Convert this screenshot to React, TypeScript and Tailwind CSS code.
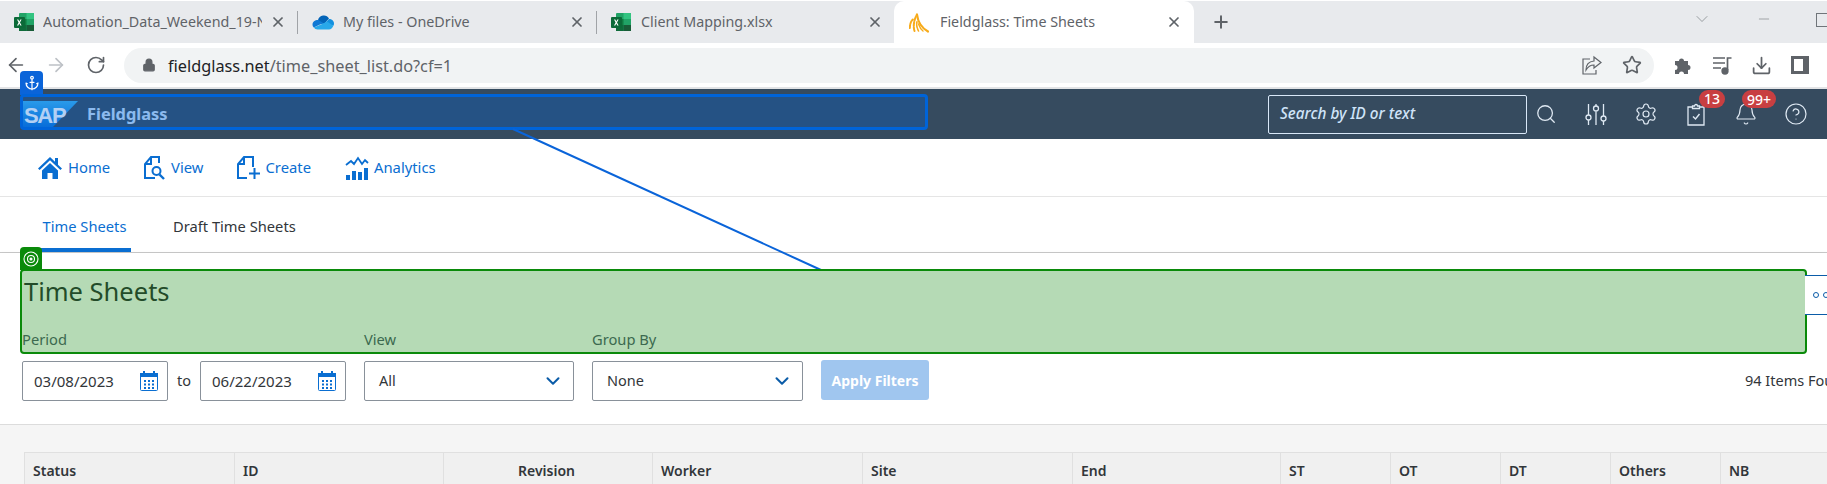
import React from "react";
import {
  ArrowLeft, ArrowRight, RotateCw, Lock, Star, Download, X, Plus, ChevronDown, Minus,
  Search, Settings, Bell, CircleHelp, Anchor,
} from "lucide-react";

const ExcelIcon = () => (
  <svg width="20" height="20" viewBox="0 0 20 20" className="shrink-0">
    <rect x="5" y="1" width="15" height="18" rx="1" fill="#21a366" />
    <rect x="12.5" y="1" width="7.5" height="6" fill="#33c481" />
    <rect x="5" y="7" width="7.5" height="6" fill="#107c41" />
    <rect x="12.5" y="13" width="7.5" height="6" fill="#185c37" />
    <rect x="5" y="13" width="7.5" height="6" fill="#0f6b3a" />
    <rect x="0" y="5" width="11" height="11" rx="1" fill="#0b6a38" />
    <path d="M3 7.5l1.6 2.9L3 13.4h1.3l1-2 1 2h1.3L6 10.4 7.6 7.5H6.3l-1 2-1-2z" fill="#fff" />
  </svg>
);

const OneDriveIcon = () => (
  <svg width="22" height="16" viewBox="0 0 22 16" className="shrink-0">
    <path d="M6 6a6 6 0 0 1 11-1.5L12 10 6.5 7.5z" fill="#0364b8" />
    <path d="M6.5 6C3 5.8.5 8 .5 10.5c0 1.2.5 2.2 1.3 3L8 10.5l4-1z" fill="#0f78d4" />
    <path d="M17 5c2.8 0 5 2 5 4.5 0 .8-.2 1.5-.6 2.2L13 9z" fill="#1490df" />
    <path d="M1.8 13.5C2.7 14.7 4 15.4 5.5 15.4H17c1.900 0 3.500-1.500 4.400-3.700L15 7.500l-6 3z" fill="#28a8ea" />
  </svg>
);

const FieldglassIcon = () => (
  <svg width="20" height="21" viewBox="0 0 20 21" fill="none" stroke="#f7ab1b" strokeLinecap="round" className="shrink-0">
    <path d="M.8 16C1 12 1.8 9.5 3.8 7.5" strokeWidth="2" strokeDasharray="3 1.2" />
    <path d="M5.5 19C4 14.5 4.8 8 8 2.5" strokeWidth="2" strokeDasharray="4 1.2" />
    <path d="M8 2.5c.8 7 4 13 11 17" strokeWidth="2.2" />
    <path d="M9.5 19c-1.800-3.500-2.300-7-1.300-10" strokeWidth="1.6" strokeDasharray="2.5 1" />
    <path d="M14 19c-2-1.500-3.500-4-4.500-7" strokeWidth="1.4" />
  </svg>
);

const SapLogo = () => (
  <div className="relative h-[27px] w-[55px] shrink-0">
    <svg width="55" height="27" viewBox="0 0 55 27" className="absolute inset-0">
      <defs>
        <linearGradient id="sap" x1="0" y1="0" x2="0" y2="1">
          <stop offset="0" stopColor="#3cb2f0" />
          <stop offset="1" stopColor="#0a70d8" />
        </linearGradient>
      </defs>
      <polygon points="0,0 55,0 29,27 0,27" fill="url(#sap)" />
    </svg>
    <span className="absolute left-[1px] top-[2px] text-[22px] font-bold leading-[25px] tracking-[-1.3px] text-white font-['Liberation_Sans',sans-serif]">SAP</span>
  </div>
);

const HomeIcon = () => (
  <svg width="24" height="24" viewBox="0 0 24 24" fill="#0a6ed1">
    <path d="M12 1 0 12.5l1.600 1.600L12 4.200l10.400 9.900 1.600-1.600-4-3.800V2h-3v3.800z" />
    <path d="M4 14.5 12 7l8 7.500V23h-5.500v-6h-5v6H4z" />
  </svg>
);

const ViewIcon = () => (
  <svg width="21" height="24" viewBox="0 0 21 24" fill="none" stroke="#0a6ed1" strokeWidth="2">
    <path d="M15 7V1H7L1 8v14h10" />
    <path d="M7 1v7H1" />
    <circle cx="12.5" cy="15" r="4" />
    <path d="m15.5 18.500 4.500 4.500" strokeWidth="2.4" />
  </svg>
);

const CreateIcon = () => (
  <svg width="24" height="24" viewBox="0 0 24 24" fill="none" stroke="#0a6ed1" strokeWidth="2">
    <path d="M16 11V1H7L1 8v14h9" />
    <path d="M7 1v7H1" />
    <path d="M17.5 12v11M12 17.500h11" />
  </svg>
);

const AnalyticsIcon = () => (
  <svg width="24" height="24" viewBox="0 0 24 24">
    <path d="m1 9 5-4 3 3 4-6 4 6 3-4 3 3" fill="none" stroke="#0a6ed1" strokeWidth="1.8" />
    <rect x="1" y="19" width="4" height="5" fill="#0a6ed1" />
    <rect x="7" y="15" width="4" height="9" fill="#0a6ed1" />
    <rect x="13" y="16" width="4" height="8" fill="#0a6ed1" />
    <rect x="19" y="12" width="4" height="12" fill="#0a6ed1" />
  </svg>
);

const CalendarIcon = () => (
  <svg width="18" height="20" viewBox="0 0 18 20" className="shrink-0">
    <rect x=".5" y="2.5" width="17" height="17" rx="1" fill="#fff" stroke="#0a6ed1" />
    <rect x="0" y="2" width="18" height="4" fill="#0a6ed1" />
    <rect x="3" y="0" width="2" height="3" fill="#0a6ed1" />
    <rect x="13" y="0" width="2" height="3" fill="#0a6ed1" />
    {[4, 8, 12].map((x) => [9, 12.5, 16].map((y) => <rect key={`${x}-${y}`} x={x} y={y} width="2" height="2" fill="#0a6ed1" />))}
  </svg>
);

const PuzzleIcon = () => (
  <svg width="19" height="19" viewBox="0 0 19 19" fill="#5f6368">
    <path d="M1 5h4a2.500 2.500 0 1 1 5 0h4v4a2.500 2.500 0 1 1 0 5v4h-4a2.500 2.500 0 1 0-5 0H1v-4a2.500 2.500 0 1 0 0-5z" />
  </svg>
);

const ShareIcon = () => (
  <svg width="20" height="20" viewBox="0 0 20 20" fill="none" stroke="#5f6368" strokeWidth="1.2">
    <path d="M8 4H1v15h13v-4" />
    <path d="M12 2l7 5.500-7 5.500V10c-4 0-6 1.500-8 5 0-5 3-8.500 8-9z" />
  </svg>
);

const QueueIcon = () => (
  <svg width="20" height="20" viewBox="0 0 20 20" fill="none" stroke="#5f6368" strokeWidth="1.7">
    <path d="M1 3h12M1 8h12M1 13h8" />
    <path d="M15.5 15V3h4" />
    <circle cx="13" cy="16" r="2.8" fill="#5f6368" />
  </svg>
);

const SidePanelIcon = () => (
  <div className="flex h-[18px] w-[18px] justify-end border-[3px] border-[#5f6368] bg-white">
    <div className="h-full w-[3px] bg-[#5f6368]" />
  </div>
);

const SlidersIcon = () => (
  <svg width="24" height="24" viewBox="0 0 24 24" fill="none" stroke="#dfe9f3" strokeWidth="1.3">
    <path d="M4.500 2v11M4.500 18v5M12 2v2M12 9.500V23M19.500 2v12M19.500 19v4" />
    <circle cx="4.5" cy="15.5" r="2.5" />
    <circle cx="12" cy="6.5" r="2.5" />
    <circle cx="19.5" cy="16.5" r="2.5" />
  </svg>
);

const ClipboardIcon = () => (
  <svg width="18" height="23" viewBox="0 0 18 23" fill="none" stroke="#dfe9f3" strokeWidth="1.3">
    <path d="M5 4H1v18h16V4h-4" />
    <path d="M5.500 5.500V3h2a1.500 1.500 0 0 1 3 0h2v2.500z" />
    <path d="m6 13.500 2.500 2.500L12.500 11" strokeWidth="1.4" />
  </svg>
);

function BrowserTab({ width, icon, title, titleWidth, gap, sep }: { width: string; icon: React.ReactNode; title: string; titleWidth: string; gap: string; sep?: boolean }) {
  return (
    <div className={`flex h-full shrink-0 items-center pl-[14px] ${width}`}>
      {icon}
      <span className={`overflow-hidden whitespace-nowrap text-[14.3px] text-[#5f6368] ${gap} ${titleWidth}`}>{title}</span>
      <X size={16} strokeWidth={2.6} className="ml-auto mr-[11px] text-[#5f6368]" />
      {sep && <div className="h-[23px] w-px bg-[#a0a3a7]" />}
    </div>
  );
}

function SelectBox({ value, width }: { value: string; width: string }) {
  return (
    <div className={`flex h-[40px] shrink-0 items-center justify-between rounded-[2px] border border-[#89919a] pl-[14px] pr-[9px] text-[14.5px] text-[#32363a] ${width}`}>
      <span>{value}</span>
      <ChevronDown size={22} strokeWidth={2.2} className="text-[#0b5ca8]" />
    </div>
  );
}

function DateBox({ value }: { value: string }) {
  return (
    <div className="flex h-[40px] w-[146px] shrink-0 items-center justify-between rounded-[2px] border border-[#89919a] pl-[11px] pr-[9px] text-[15px] text-[#32363a]">
      <span>{value}</span>
      <CalendarIcon />
    </div>
  );
}

const columns: [string, string, string?][] = [
  ["Status", "w-[210px]"],
  ["ID", "w-[209px]"],
  ["Revision", "w-[209px]", "pl-[66px]"],
  ["Worker", "w-[210px]"],
  ["Site", "w-[210px]"],
  ["End", "w-[208px]"],
  ["ST", "w-[110px]"],
  ["OT", "w-[110px]"],
  ["DT", "w-[110px]"],
  ["Others", "w-[110px]"],
  ["NB", "w-[107px]"],
];

export default function App() {
  return (
    <div className="relative h-[484px] w-[1827px] overflow-hidden bg-white font-['Noto_Sans',sans-serif]">
      {/* browser tab strip */}
      <div className="flex h-[43px] items-center border-t border-white bg-[#e8eaed]">
        <BrowserTab width="w-[298px]" icon={<ExcelIcon />} title="Automation_Data_Weekend_19-N" titleWidth="w-[219px]" gap="ml-[9px]" sep />
        <BrowserTab width="w-[299px]" icon={<OneDriveIcon />} title="My files - OneDrive" titleWidth="w-[200px]" gap="ml-[9px]" sep />
        <BrowserTab width="w-[297px]" icon={<ExcelIcon />} title="Client Mapping.xlsx" titleWidth="w-[200px]" gap="ml-[10px]" />
        <div className="flex h-full w-[300px] shrink-0 items-center rounded-t-[10px] bg-white pl-[15px]">
          <FieldglassIcon />
          <span className="ml-[11px] whitespace-nowrap text-[14.3px] text-[#5f6368]">Fieldglass: Time Sheets</span>
          <X size={16} strokeWidth={2.6} className="ml-auto mr-[12px] text-[#5f6368]" />
        </div>
        <Plus size={20} strokeWidth={2.4} className="ml-[17px] text-[#5f6368]" />
        <div className="ml-auto flex items-start gap-[44px] self-start pt-[8px] text-[#70757a]">
          <ChevronDown size={20} strokeWidth={0.8} />
          <Minus size={16} strokeWidth={0.9} className="mt-[2px]" />
          <div className="relative mr-[-1px] mt-[4px] h-[14px] w-[12px] border border-[#70757a]" />
        </div>
      </div>

      {/* browser toolbar */}
      <div className="flex h-[46px] items-center border-b-2 border-[#e3e4e6] bg-white">
        <ArrowLeft size={22} strokeWidth={1.8} className="ml-[5px] text-[#5f6368]" />
        <ArrowRight size={22} strokeWidth={1.8} className="ml-[18px] text-[#bdc1c6]" />
        <RotateCw size={20} strokeWidth={2} className="ml-[19px] text-[#5f6368]" />
        <div className="ml-[18px] flex h-[35px] w-[1530px] items-center rounded-full bg-[#f1f3f4] pl-[18px] pr-[12px]">
          <Lock size={14} fill="#5f6368" className="text-[#5f6368]" />
          <span className="ml-[12px] whitespace-nowrap pt-[2px] text-[16.3px] text-[#5f6368]">
            <span className="text-[#202124]">fieldglass.net</span>/time_sheet_list.do?cf=1
          </span>
          <div className="ml-auto flex items-center gap-[20px]">
            <ShareIcon />
            <Star size={20} strokeWidth={2} className="text-[#5f6368]" />
          </div>
        </div>
        <div className="ml-[20px] flex items-center gap-[19px]">
          <PuzzleIcon />
          <QueueIcon />
          <Download size={21} strokeWidth={2} className="text-[#5f6368]" />
          <SidePanelIcon />
        </div>
      </div>

      {/* Fieldglass header */}
      <div className="flex h-[50px] items-center bg-[#364b5f] pl-[23px]">
        <SapLogo />
        <span className="ml-[9px] text-[16.4px] font-bold text-[#c9e0f8]">Fieldglass</span>
        <div className="ml-auto flex h-[39px] w-[259px] items-center rounded-[2px] border border-[#d9e8f8] pb-[1px] pl-[11px] text-[15.3px] font-medium italic text-[#cfe3f8]">
          Search by ID or text
        </div>
        <div className="ml-[7px] flex w-[293px] items-center gap-[26px] text-[#dfe9f3]">
          <div className="flex w-[24px] justify-center"><Search size={22} strokeWidth={1.4} /></div>
          <SlidersIcon />
          <Settings size={24} strokeWidth={1.2} />
          <div className="relative flex w-[24px] justify-center">
            <ClipboardIcon />
            <span className="absolute left-[15px] top-[-13px] flex h-[18px] w-[26px] items-center justify-center rounded-full bg-[#c83f41] text-[14px] font-medium text-white">13</span>
          </div>
          <div className="relative">
            <Bell size={24} strokeWidth={1.2} />
            <span className="absolute left-[8px] top-[-12px] flex h-[18px] w-[34px] items-center justify-center rounded-full bg-[#c83f41] text-[14px] font-medium text-white">99+</span>
          </div>
          <CircleHelp size={24} strokeWidth={1.2} />
        </div>
      </div>

      {/* main nav */}
      <div className="flex h-[58px] items-center border-b border-[#e5e5e5] pl-[38px] text-[14.8px] text-[#0a6ed1]">
        <HomeIcon />
        <span className="ml-[6px]">Home</span>
        <div className="ml-[34px] flex items-center gap-[6px]"><ViewIcon /><span>View</span></div>
        <div className="ml-[33px] flex items-center gap-[5px]"><CreateIcon /><span>Create</span></div>
        <div className="ml-[34px] flex items-center gap-[5px]"><AnalyticsIcon /><span>Analytics</span></div>
      </div>

      {/* sub tabs */}
      <div className="flex h-[56px] border-b border-[#c9c9c9] pl-[38px] text-[14.7px]">
        <div className="flex h-full w-[93px] items-center justify-center border-b-[4px] border-[#0a6ed1] pt-[8px] text-[#0a6ed1]">Time Sheets</div>
        <div className="ml-[42px] flex h-full items-center pt-[4px] text-[#32363a]">Draft Time Sheets</div>
      </div>

      {/* filters */}
      <div className="h-[172px] border-b border-[#dcdcdc] pl-[22px] shadow-[0_2px_6px_rgba(0,0,0,0.08)]">
        <h1 className="pl-[2px] pt-[20px] text-[25.5px] font-normal leading-[36px] text-[#32363a]">Time Sheets</h1>
        <div className="mt-[20px] flex text-[14.7px] leading-[20px] text-[#556070]">
          <span className="w-[342px]">Period</span>
          <span className="w-[228px]">View</span>
          <span>Group By</span>
        </div>
        <div className="mt-[12px] flex items-start">
          <DateBox value="03/08/2023" />
          <span className="w-[32px] shrink-0 pt-[9px] text-center text-[14.5px] text-[#32363a]">to</span>
          <DateBox value="06/22/2023" />
          <SelectBox value="All" width="ml-[18px] w-[210px]" />
          <SelectBox value="None" width="ml-[18px] w-[211px]" />
          <div className="ml-[18px] mt-[-1px] flex h-[40px] w-[108px] shrink-0 items-center justify-center rounded-[3px] bg-[#a0c6ef] text-[14px] font-bold text-white">Apply Filters</div>
          <span className="ml-[816px] shrink-0 whitespace-nowrap pt-[9px] text-[14.5px] text-[#32363a]">94 Items Found</span>
        </div>
      </div>

      {/* table */}
      <div className="h-[200px] bg-[#f5f5f5] pl-[24px] pt-[27px]">
        <div className="flex h-[60px] border-l border-t border-[#e0e0e0] bg-[#f0f0f0] text-[14px] font-semibold text-[#32363a]">
          {columns.map(([label, width, extra]) => (
            <div key={label} className={`h-full shrink-0 border-r border-[#e0e0e0] pl-[8px] pt-[7px] ${width}`}>
              <span className={extra}>{label}</span>
            </div>
          ))}
        </div>
      </div>

      {/* highlight overlays */}
      <div className="absolute left-[20px] top-[71px] flex h-[24px] w-[23px] items-center justify-center rounded-t-[4px] bg-[#0a64d9] text-white">
        <Anchor size={16} strokeWidth={1.8} />
      </div>
      <div className="absolute left-[20px] top-[94px] h-[36px] w-[908px] rounded-[4px] border-[3px] border-[#0064d9] bg-[#0064d9]/30" />
      <svg className="absolute left-[500px] top-[120px]" width="340" height="160" viewBox="0 0 340 160">
        <line x1="13" y1="9" x2="321" y2="150" stroke="#0a64d9" strokeWidth="2" />
      </svg>
      <div className="absolute left-[20px] top-[247px] flex h-[23px] w-[22px] items-center justify-center rounded-t-[4px] bg-[#0a8a0a]">
        <svg width="16" height="16" viewBox="0 0 16 16" fill="none" stroke="#fff" strokeWidth="1.1">
          <circle cx="8" cy="8" r="7" />
          <circle cx="8" cy="8" r="3.5" />
          <circle cx="8" cy="8" r="1" fill="#fff" />
        </svg>
      </div>
      <div className="absolute left-[20px] top-[269px] h-[85px] w-[1787px] rounded-[4px] border-2 border-[#0a8a0a] bg-[#008000]/[0.29]" />
      <div className="absolute left-[1805px] top-[275px] flex h-[40px] w-[30px] items-center gap-[4px] border-y border-[#0b5ca8] bg-white pl-[8px]">
        <span className="h-[6px] w-[6px] rounded-full border border-[#0b5ca8]" />
        <span className="h-[6px] w-[6px] rounded-full border border-[#0b5ca8]" />
      </div>
    </div>
  );
}
